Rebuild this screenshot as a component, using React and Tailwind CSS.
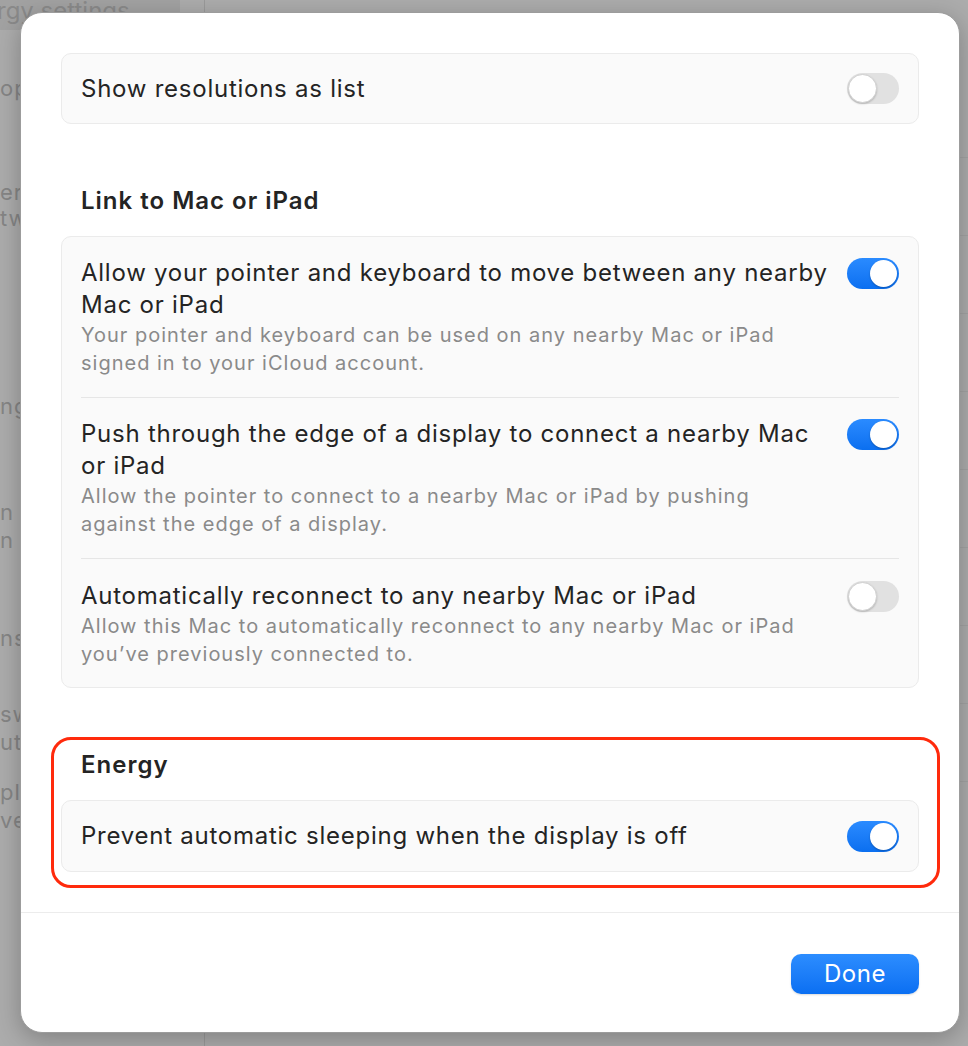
import React from "react";

function Toggle({ on }) {
  if (on) {
    return (
      <div className="w-[52px] h-[31px] rounded-full bg-gradient-to-b from-[#2a8bff] to-[#0a6ff0] flex items-center justify-end px-[2px] shrink-0">
        <div className="w-[27px] h-[27px] rounded-full bg-white shadow-[0_1px_2px_rgba(0,0,0,0.25)]" />
      </div>
    );
  }
  return (
    <div className="w-[52px] h-[31px] rounded-full bg-[#e1e1e1] flex items-center justify-start px-[1px] shrink-0">
      <div className="w-[29px] h-[29px] rounded-full bg-white border border-[#d0d0d0] shadow-[0_1px_2px_rgba(0,0,0,0.2)]" />
    </div>
  );
}

function Row({ title, sub, on, divider, last }) {
  return (
    <div className={divider ? "mx-[19px] border-t border-[#e6e6e6]" : "mx-[19px]"}>
      <div className={last ? "flex items-start justify-between pt-[21px] pb-[19px]" : "flex items-start justify-between py-[20px]"}>
        <div>
          <div className="text-[24px] leading-[32px] tracking-[0.75px] text-[#242424]">{title}</div>
          {sub && <div className="text-[20px] leading-[28px] tracking-[1px] text-[#8a8a8a]">{sub}</div>}
        </div>
        <div className="pt-[1px]">
          <Toggle on={on} />
        </div>
      </div>
    </div>
  );
}

const sideBits = [
  ["op", "mt-[46px]"],
  ["er", "mt-[80px]"],
  ["tw", "mt-[2px]"],
  ["ng", "mt-[164px]"],
  ["n", "mt-[82px]"],
  ["n m", "mt-[4px]"],
  ["ns", "mt-[74px]"],
  ["sw", "mt-[52px]"],
  ["ut", "mt-[4px]"],
  ["pla", "mt-[26px]"],
  ["ve", "mt-[4px]"],
];

export default function App() {
  return (
    <div
      className="relative w-[968px] h-[1046px] overflow-hidden bg-[#acacac] flex"
      style={{ fontFamily: "Inter, 'Liberation Sans', sans-serif" }}
    >
      {/* window behind the sheet */}
      <div className="w-[205px] h-full border-r border-[#9a9a9a] flex flex-col">
        <div className="h-[30px] w-[183px] bg-[#a2a2a2] text-[24px] leading-[22px] text-[#8a8a8a] -ml-[3px] whitespace-nowrap">
          rgy settings
        </div>
        {sideBits.map(([t, m], i) => (
          <div key={i} className={`${m} text-[22px] leading-[24px] tracking-[1px] text-[#858585] whitespace-nowrap`}>
            {t}
          </div>
        ))}
      </div>
      <div className="flex-1 flex flex-col">
        <div className="h-[80px]" />
        {[0, 1, 2, 3, 4, 5, 6, 7, 8].map((i) => (
          <div key={i} className="h-[78px] border-b border-[#a3a3a3]" />
        ))}
      </div>

      {/* sheet */}
      <div className="absolute left-[20px] top-[12px] w-[940px] h-[1021px] bg-white rounded-[22px] border border-[#9c9c9c] shadow-[0_6px_24px_rgba(0,0,0,0.25)] flex flex-col">
        <div className="flex-1 px-[40px] pt-[40px]">
          <div className="rounded-[10px] bg-[#fafafa] border border-[#ebebeb] h-[71px] flex items-center justify-between px-[19px]">
            <span className="text-[24px] tracking-[0.75px] text-[#242424]">Show resolutions as list</span>
            <Toggle on={false} />
          </div>

          <div className="mt-[61px] px-5 text-[24px] font-semibold leading-[32px] tracking-[1px] text-[#242424]">
            Link to Mac or iPad
          </div>

          <div className="mt-[19px] rounded-[10px] bg-[#fafafa] border border-[#ebebeb]">
            <Row
              title={<>Allow your pointer and keyboard to move between any nearby<br />Mac or iPad</>}
              sub={<>Your pointer and keyboard can be used on any nearby Mac or iPad<br />signed in to your iCloud account.</>}
              on
            />
            <Row
              title={<>Push through the edge of a display to connect a nearby Mac<br />or iPad</>}
              sub={<>Allow the pointer to connect to a nearby Mac or iPad by pushing<br />against the edge of a display.</>}
              on
              divider
            />
            <Row
              title="Automatically reconnect to any nearby Mac or iPad"
              sub={<>Allow this Mac to automatically reconnect to any nearby Mac or iPad<br />you’ve previously connected to.</>}
              on={false}
              divider
              last
            />
          </div>

          <div className="mt-[49px] -ml-[10px] -mr-[21px] rounded-[20px] border-[3px] border-[#ff2a0c] pl-[7px] pr-[18px] pt-[9px] pb-[13px]">
            <div className="px-5 text-[24px] font-semibold leading-[32px] tracking-[1px] text-[#242424]">Energy</div>
            <div className="mt-[19px] rounded-[10px] bg-[#fafafa] border border-[#ebebeb] h-[72px] flex items-center justify-between px-[19px]">
              <span className="text-[24px] tracking-[0.75px] text-[#242424]">Prevent automatic sleeping when the display is off</span>
              <Toggle on />
            </div>
          </div>
        </div>

        <div className="h-[120px] border-t border-[#ececec] flex items-start justify-end px-[40px] pt-[41px]">
          <button className="w-[128px] h-[40px] rounded-[10px] bg-gradient-to-b from-[#2c8dff] to-[#0a6ff2] text-white text-[24px] leading-[40px] tracking-[0.5px] shadow-[0_1px_2px_rgba(0,0,0,0.15)]">
            Done
          </button>
        </div>
      </div>
    </div>
  );
}
